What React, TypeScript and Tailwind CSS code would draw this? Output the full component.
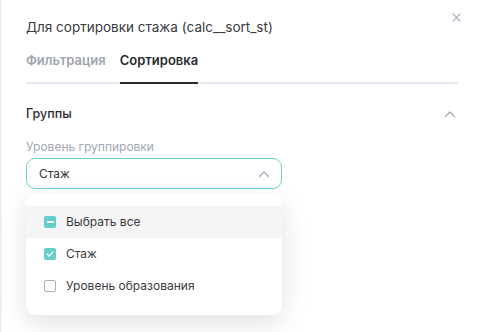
import React from "react";

const Chevron = ({ className }: { className?: string }) => (
  <svg className={className} width="12" height="8" viewBox="0 0 12 8" fill="none">
    <path d="M1.5 6.5L6 2L10.5 6.5" stroke="#a5a9bd" strokeWidth="1.3" strokeLinecap="round" strokeLinejoin="round" />
  </svg>
);

export default function App() {
  return (
    <div
      className="w-[478px] h-[332px] bg-white border-l-2 border-[#f0f0f2] overflow-hidden relative"
      style={{ fontFamily: "Inter, 'Noto Sans', sans-serif" }}
    >
      <div className="pl-[24px] pr-[17px] pt-[15px]">
        <div className="flex justify-between items-start">
          <div className="text-[13.5px] text-[#3a3a40] leading-[20px] pt-[2px]">
            Для сортировки стажа (calc__sort_st)
          </div>
          <svg className="-mt-[2px]" width="9" height="9" viewBox="0 0 9 9" fill="none">
            <path d="M1 1L8 8M8 1L1 8" stroke="#b0b4c6" strokeWidth="1.2" strokeLinecap="round" />
          </svg>
        </div>
        <div className="mt-[14px] flex border-b-2 border-[#e6e9f1] w-[432px]">
          <div className="text-[13px] font-semibold text-[#9ea3b0] pb-[11px] mr-[14px]">Фильтрация</div>
          <div className="text-[13px] font-semibold text-[#2a2a2e] pb-[11px] border-b-2 border-[#2a2a2e] -mb-[2px]">
            Сортировка
          </div>
        </div>
        <div className="mt-[21px] flex justify-between items-center w-[432px]">
          <div className="text-[12.5px] font-medium text-[#2a2a2e]">Группы</div>
          <Chevron className="mr-[2px]" />
        </div>
        <div className="mt-[16px] text-[12px] text-[#a2a6b5] leading-[16px]">Уровень группировки</div>
        <div className="mt-[3px] w-[256px] h-[31px] rounded-[9px] border-[1.5px] border-[#6dd2ce] flex items-center justify-between pl-[12px] pr-[11px]">
          <span className="text-[12px] text-[#333338]">Стаж</span>
          <Chevron />
        </div>
        <div className="mt-[5px] w-[256px] bg-white rounded-[9px] shadow-[0_8px_28px_rgba(0,0,0,0.12)] pt-[12px] pb-[13px]">
          <div className="h-[32px] bg-[#f5f5f6] flex items-center pl-[18px]">
            <span className="w-[12px] h-[12px] rounded-[2px] bg-[#66cdca] flex items-center justify-center">
              <span className="w-[7px] h-[2px] bg-white rounded-[1px]" />
            </span>
            <span className="ml-[10px] text-[12px] text-[#3a3a40]">Выбрать все</span>
          </div>
          <div className="h-[32px] flex items-center pl-[18px]">
            <span className="w-[12px] h-[12px] rounded-[2px] bg-[#66cdca] flex items-center justify-center">
              <svg width="8" height="6" viewBox="0 0 8 6" fill="none">
                <path d="M1 3L3 5L7 1" stroke="white" strokeWidth="1.2" strokeLinecap="round" strokeLinejoin="round" />
              </svg>
            </span>
            <span className="ml-[10px] text-[12px] text-[#3a3a40]">Стаж</span>
          </div>
          <div className="h-[32px] flex items-center pl-[18px]">
            <span className="w-[12px] h-[12px] rounded-[2px] border border-[#a9adc0] bg-white" />
            <span className="ml-[10px] text-[12px] text-[#3a3a40]">Уровень образования</span>
          </div>
        </div>
      </div>
    </div>
  );
}
